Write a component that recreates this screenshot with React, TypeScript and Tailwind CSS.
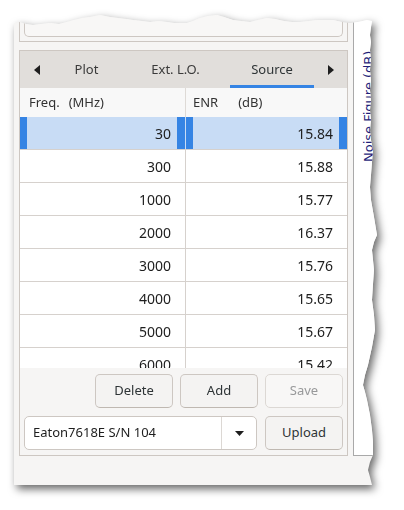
import React from "react";

const rows: [string, string][] = [
  ["30", "15.84"],
  ["300", "15.88"],
  ["1000", "15.77"],
  ["2000", "16.37"],
  ["3000", "15.76"],
  ["4000", "15.65"],
  ["5000", "15.67"],
  ["6000", "15.42"],
];

function LeftArrow() {
  return (
    <svg width="6" height="10" viewBox="0 0 6 10">
      <path d="M6 0 L0 5 L6 10 Z" fill="#1e1e1e" />
    </svg>
  );
}

function RightArrow() {
  return (
    <svg width="6" height="10" viewBox="0 0 6 10">
      <path d="M0 0 L6 5 L0 10 Z" fill="#1e1e1e" />
    </svg>
  );
}

function Button({ label, disabled }: { label: string; disabled?: boolean }) {
  return (
    <div
      className={
        disabled
          ? "w-[78px] h-[34px] flex items-center justify-center rounded-[5px] border border-[#dcd8d4] bg-[#f8f7f6] text-[#98999a]"
          : "w-[78px] h-[34px] flex items-center justify-center rounded-[5px] border border-[#cdc7c2] border-b-[#bfb8b1] bg-[#f4f3f2] text-[#2e3436]"
      }
    >
      {label}
    </div>
  );
}

export default function App() {
  return (
    <div className="w-[404px] h-[510px] bg-white overflow-hidden font-['Noto_Sans',sans-serif] text-[13px] text-[#2e3436]">
      <div className="ml-[14px] mt-[12px] w-[364px] [filter:drop-shadow(3px_4px_4px_rgba(0,0,0,0.6))]">
        <div className="h-[473px] bg-[#f6f5f4] flex items-start pl-[5px] [clip-path:polygon(0_11px,6px_10px,12px_12px,19px_13px,27px_12px,36px_11px,45px_12px,53px_10px,60px_8px,68px_6px,76px_5px,86px_3px,91px_4px,96px_5px,104px_6px,112px_7px,119px_8px,128px_9px,136px_10px,145px_9px,153px_10px,160px_11px,173px_11px,179px_9px,186px_6px,194px_4px,203px_3px,210px_5px,219px_8px,227px_9px,236px_10px,244px_8px,253px_6px,261px_7px,270px_9px,278px_10px,286px_10px,295px_9px,303px_8px,319px_8px,328px_10px,336px_11px,344px_10px,353px_8px,358px_9px,357px_15px,356px_23px,357px_30px,356px_38px,357px_48px,356px_58px,357px_68px,356px_78px,357px_88px,356px_98px,357px_108px,356px_118px,357px_128px,359px_138px,358px_150px,357px_163px,356px_175px,357px_188px,360px_205px,363px_223px,360px_230px,358px_238px,359px_248px,360px_258px,359px_272px,358px_288px,360px_303px,361px_318px,358px_335px,354px_353px,351px_363px,349px_373px,351px_380px,353px_388px,356px_403px,358px_418px,359px_430px,359px_443px,356px_450px,354px_458px,356px_465px,358px_473px,0_473px)]">
          {/* left column */}
          <div className="w-[329px] -mt-[10px] flex flex-col">
            {/* upper frame */}
            <div className="h-[40px] border-x border-b border-[#cdc7c2] px-[4px] pb-[4px] flex flex-col justify-end">
              <div className="h-[22px] rounded-b-[5px] border-x border-b border-[#cdc7c2] bg-[#f8f7f6]" />
            </div>

            {/* notebook */}
            <div className="mt-[8px] border border-[#cdc7c2] flex flex-col">
              {/* tabs */}
              <div className="h-[37px] bg-[#e1dedb] flex items-stretch">
                <div className="w-[34px] flex items-center justify-center">
                  <LeftArrow />
                </div>
                <div className="w-[65px] flex items-center justify-center border-y-[3px] border-transparent text-[#3a3a3a]">
                  Plot
                </div>
                <div className="ml-[11px] w-[91px] flex items-center justify-center border-y-[3px] border-transparent text-[#3a3a3a]">
                  Ext. L.O.
                </div>
                <div className="ml-[9px] w-[84px] flex items-center justify-center border-t-[3px] border-t-transparent border-b-[3px] border-b-[#3584e4] text-[#2e3436]">
                  Source
                </div>
                <div className="flex-1 flex items-center justify-center">
                  <RightArrow />
                </div>
              </div>

              {/* table */}
              <div className="h-[280px] overflow-hidden bg-white flex flex-col">
                <div className="h-[29px] shrink-0 flex bg-[#f8f8f8] text-[#333]">
                  <div className="w-[166px] border-r border-[#dedad6] flex items-center pl-[9px]">
                    <span>Freq.</span>
                    <span className="ml-[9px]">(MHz)</span>
                  </div>
                  <div className="flex-1 flex items-center pl-[7px]">
                    <span>ENR</span>
                    <span className="ml-[20px]">(dB)</span>
                  </div>
                </div>
                {rows.map(([f, e], i) =>
                  i === 0 ? (
                    <div key={f} className="h-[33px] shrink-0 flex bg-[#c8dcf5] border-b border-[#d6d1cd] text-[14px] text-[#1e1e1e]">
                      <div className="w-[166px] flex border-r border-[#c8dcf5]">
                        <div className="w-[7px] bg-[#3584e4]" />
                        <div className="flex-1 flex items-center justify-end pr-[6px]">{f}</div>
                        <div className="w-[8px] bg-[#3584e4]" />
                      </div>
                      <div className="flex-1 flex">
                        <div className="w-[7px] bg-[#3584e4]" />
                        <div className="flex-1 flex items-center justify-end pr-[6px]">{e}</div>
                        <div className="w-[8px] bg-[#3584e4]" />
                      </div>
                    </div>
                  ) : (
                    <div key={f} className="h-[33px] shrink-0 flex border-b border-[#d6d1cd] text-[14px] text-[#1e1e1e]">
                      <div className="w-[166px] border-r border-[#d6d1cd] flex items-center justify-end pr-[14px]">{f}</div>
                      <div className="flex-1 flex items-center justify-end pr-[14px]">{e}</div>
                    </div>
                  )
                )}
              </div>

              {/* buttons */}
              <div className="mt-[6px] flex justify-end gap-[7px] pr-[4px]">
                <Button label="Delete" />
                <Button label="Add" />
                <Button label="Save" disabled />
              </div>

              {/* combo row */}
              <div className="mt-[8px] mb-[5px] flex gap-[8px] pl-[4px] pr-[4px]">
                <div className="w-[234px] h-[34px] flex rounded-[5px] border border-[#cdc7c2] bg-white">
                  <div className="flex-1 flex items-center pl-[8px] text-[#1e1e1e]">Eaton7618E S/N 104</div>
                  <div className="w-[35px] border-l border-[#dcd8d4] flex items-center justify-center">
                    <svg width="9" height="5" viewBox="0 0 9 5">
                      <path d="M0 0 L9 0 L4.5 5 Z" fill="#1e1e1e" />
                    </svg>
                  </div>
                </div>
                <Button label="Upload" />
              </div>
            </div>
          </div>

          {/* right panel */}
          <div className="ml-[5px] -mt-[10px] h-[454px] flex-1 bg-white border-l border-b border-[#a9a9a9] pl-[7px]">
            <div className="mt-[30px] h-[130px] leading-[15px] [writing-mode:vertical-rl] rotate-180 font-['DejaVu_Sans',sans-serif] text-[13px] text-[#1f1f7a] whitespace-nowrap">
              Noise Figure (dB)
            </div>
          </div>
        </div>
      </div>
    </div>
  );
}
